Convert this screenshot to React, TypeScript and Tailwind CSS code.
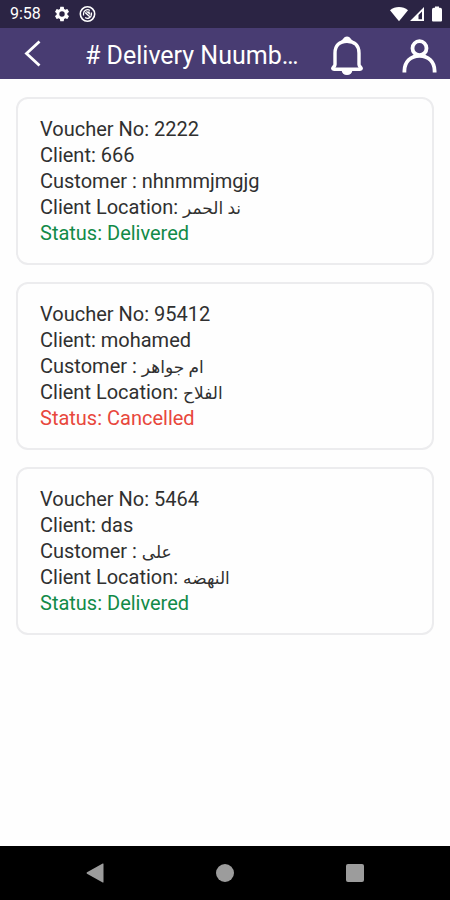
type Status = "Delivered" | "Cancelled";

type Voucher = {
  no: string;
  client: string;
  customer: string;
  location: string;
  status: Status;
};

const vouchers: Voucher[] = [
  { no: "2222", client: "666", customer: "nhnmmjmgjg", location: "ند الحمر", status: "Delivered" },
  { no: "95412", client: "mohamed", customer: "ام جواهر", location: "الفلاح", status: "Cancelled" },
  { no: "5464", client: "das", customer: "على", location: "النهضه", status: "Delivered" },
];

const statusColor: Record<Status, string> = {
  Delivered: "text-[#128a48]",
  Cancelled: "text-[#e8473c]",
};

const isArabic = (text: string) => /[\u0600-\u06ff]/.test(text);

function Value({ text }: { text: string }) {
  if (!isArabic(text)) return <>{text}</>;
  return (
    <bdi lang="ar" className="text-[17px] leading-none">
      {text}
    </bdi>
  );
}

function StatusBar() {
  return (
    <div className="flex h-7 items-center bg-[#2b2444] pl-[10px] pr-2 text-white">
      <span className="text-base leading-7">9:58</span>
      {/* Settings */}
      <svg className="ml-3" width="18" height="18" viewBox="0 0 24 24" fill="currentColor">
        <path d="M19.14 12.94c.04-.3.06-.61.06-.94 0-.32-.02-.64-.07-.94l2.03-1.58a.49.49 0 0 0 .12-.61l-1.92-3.32a.49.49 0 0 0-.59-.22l-2.39.96c-.5-.38-1.03-.7-1.62-.94l-.36-2.54a.48.48 0 0 0-.48-.41h-3.84c-.24 0-.43.17-.47.41l-.36 2.54c-.59.24-1.13.57-1.62.94l-2.39-.96a.48.48 0 0 0-.59.22L2.74 8.87c-.12.21-.08.47.12.61l2.03 1.58c-.05.3-.09.63-.09.94s.02.64.07.94l-2.03 1.58a.49.49 0 0 0-.12.61l1.92 3.32c.12.22.37.29.59.22l2.39-.96c.5.38 1.03.7 1.62.94l.36 2.54c.05.24.24.41.48.41h3.84c.24 0 .44-.17.47-.41l.36-2.54c.59-.24 1.13-.56 1.62-.94l2.39.96c.22.08.47 0 .59-.22l1.92-3.32a.49.49 0 0 0-.12-.61l-2.01-1.58ZM12 15.6a3.6 3.6 0 1 1 0-7.2 3.6 3.6 0 0 1 0 7.2Z" />
      </svg>
      {/* Data sync */}
      <svg className="ml-2" width="17" height="18" viewBox="0 0 18 18" fill="none" stroke="currentColor">
        <circle cx="9" cy="9" r="7.600" strokeWidth="1.700" />
        <path d="M4.800 10.500V8.500A4.200 4.200 0 0 1 11.500 5.300M13.200 7.500v2a4.200 4.200 0 0 1-6.700 3.200" strokeWidth="1.300" />
        <path d="M6.500 7.500 11.500 12" strokeWidth="1.500" />
        <path d="M7.500 6.500h3.500l1 3.200Z" fill="currentColor" strokeWidth=".5" />
      </svg>
      <div className="ml-auto flex items-center gap-[1px]">
        <svg width="18" height="16" viewBox="0 0 18 16" fill="currentColor">
          <path d="M0 4.200C5-.2 13-.2 18 4.200L9 15.300Z" />
        </svg>
        <svg width="16" height="16" viewBox="0 0 16 16" fill="currentColor">
          <path fillRule="evenodd" d="M15 1v14H1ZM13 5.500 9.500 9v4.200H13Z" />
        </svg>
        <svg className="ml-[6px]" width="10" height="16" viewBox="0 0 10 16" fill="currentColor">
          <path d="M3 .500h4v1.300h1.200q1.800.2 1.800 2V14.500q0 1-1 1H1q-1 0-1-1V3.800Q0 2 1.800 1.800H3Z" />
        </svg>
      </div>
    </div>
  );
}

function Header() {
  return (
    <header className="flex h-[51px] items-center bg-[#483c72] pl-6 pr-3 pt-1 text-white">
      <button type="button" aria-label="Back" className="shrink-0">
        <svg width="17" height="32" viewBox="0 0 17 32" fill="none" stroke="currentColor" strokeWidth="2.800">
          <path d="M15.500 1.500 2.500 13.500 15.500 25.500" />
        </svg>
      </button>
      <h1 className="ml-11 min-w-0 flex-1 truncate text-[25px] leading-[47px]"># Delivery Nuumb…</h1>
      <button type="button" aria-label="Notifications" className="ml-5 shrink-0">
        <svg width="34" height="40" viewBox="0 0 34 40" fill="none" stroke="currentColor">
          <path
            d="M5 17C5 9.500 9.500 5.200 17 5.200S29 9.500 29 17V28.500Q29 29.500 30 30.500C32 32.500 31.500 33.200 30 33.200H4C2.500 33.200 2 32.500 4 30.500Q5 29.500 5 28.500Z"
            strokeWidth="3.400"
          />
          <path d="M10.500 5.500C13 4 13.500 .500 17 .500s4 3.500 6.500 5ZM11.500 34h11c-.5 3.200-2.300 5-5.500 5s-5-1.800-5.500-5Z" fill="currentColor" stroke="none" />
        </svg>
      </button>
      <button type="button" aria-label="Profile" className="ml-[38px] shrink-0">
        <svg width="36" height="34" viewBox="0 0 36 34" fill="none" stroke="currentColor" strokeWidth="3.800">
          <circle cx="17.500" cy="9.200" r="7" />
          <path d="M2.400 33.500V32C2.400 23 8.500 16.800 17.500 16.800S32.600 23 32.600 32v1.500" />
        </svg>
      </button>
    </header>
  );
}

function VoucherCard({ voucher }: { voucher: Voucher }) {
  return (
    <li className="rounded-xl border-2 border-[#ececee] px-[22px] py-[17px] text-xl leading-[26px] text-[#303030]">
      <p>Voucher No: {voucher.no}</p>
      <p>Client: {voucher.client}</p>
      <p>
        Customer : <Value text={voucher.customer} />
      </p>
      <p>
        Client Location: <Value text={voucher.location} />
      </p>
      <p className={statusColor[voucher.status]}>Status: {voucher.status}</p>
    </li>
  );
}

function NavBar() {
  return (
    <nav className="flex h-[54px] items-center bg-black px-[30px] text-[#9c9c9c]">
      <button type="button" aria-label="Back" className="flex flex-1 justify-center">
        <svg width="18" height="20" viewBox="0 0 18 20" fill="currentColor">
          <path d="M17.500 1v18q0 .8-.8.4L1 10.700q-1-.7 0-1.400L16.700.600q.8-.4.8.4Z" />
        </svg>
      </button>
      <button type="button" aria-label="Home" className="flex flex-1 justify-center">
        <span className="size-[18px] rounded-full bg-current" />
      </button>
      <button type="button" aria-label="Overview" className="flex flex-1 justify-center">
        <span className="size-[18px] rounded-[2px] bg-current" />
      </button>
    </nav>
  );
}

export default function App() {
  return (
    <div className="flex min-h-screen flex-col bg-[#fefefe] font-['Roboto','DejaVu_Sans',sans-serif]">
      <StatusBar />
      <Header />
      <main className="flex-1 px-4 py-[18px]">
        <ul className="flex flex-col gap-[17px]">
          {vouchers.map((voucher) => (
            <VoucherCard key={voucher.no} voucher={voucher} />
          ))}
        </ul>
      </main>
      <NavBar />
    </div>
  );
}
